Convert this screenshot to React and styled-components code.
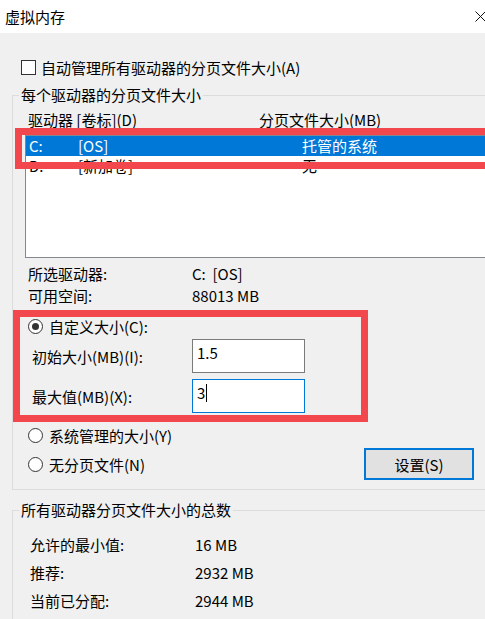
import React from "react";
import styled, { createGlobalStyle } from "styled-components";

const GlobalStyle = createGlobalStyle`
  html, body {
    margin: 0;
    padding: 0;
    background: #f0f0f0;
  }
  body {
    font-family: "Noto Sans CJK SC", "Noto Sans", sans-serif;
    font-size: 15px;
    color: #000;
  }
`;

const Window = styled.div`
  position: relative;
  width: 485px;
  height: 619px;
  overflow: hidden;
  background: #f0f0f0;
`;

const TitleBar = styled.div`
  height: 33px;
  background: #fff;
  display: flex;
  align-items: center;
  justify-content: space-between;
  padding-left: 5px;
  line-height: 22px;
`;

const CloseIcon = styled.svg`
  width: 11px;
  height: 11px;
  margin-right: -1px;
`;

const Body = styled.div`
  padding: 23px 0 0 12px;
`;

const CheckRow = styled.label`
  display: flex;
  align-items: center;
  gap: 5px;
  height: 22px;
  margin-left: 9px;
`;

const CheckBox = styled.span`
  width: 15px;
  height: 15px;
  box-sizing: border-box;
  border: 1px solid #333;
  background: #fff;
`;

const Group = styled.fieldset`
  margin: ${p => p.$top}px 0 0 0;
  padding: ${p => p.$padTop}px 0 ${p => p.$padBottom}px 0;
  width: 520px;
  min-width: 0;
  border: 1px solid #dcdcdc;
  border-right: none;
`;

const Legend = styled.legend`
  margin-left: 6px;
  padding: 0 2px;
  line-height: 22px;
`;

const HeaderRow = styled.div`
  display: flex;
  height: 22px;
  line-height: 22px;
  padding-left: 15px;
`;

const HeaderCell = styled.span`
  width: ${p => p.$w || "auto"};
`;

const ListBox = styled.div`
  margin: 4px 0 0 12px;
  height: 121px;
  background: #fff;
  border: 1px solid #828790;
  border-right: none;
`;

const ListRow = styled.div`
  display: flex;
  height: 20px;
  line-height: 20px;
  padding-left: 3px;
  background: ${p => (p.$selected ? "#0078d7" : "transparent")};
  color: ${p => (p.$selected ? "#fff" : "#000")};
`;

const Cell = styled.span`
  width: ${p => p.$w || "auto"};
  white-space: nowrap;
`;

const InfoList = styled.div`
  margin-top: ${p => p.$top}px;
`;

const InfoRow = styled.div`
  display: flex;
  height: ${p => p.$h}px;
  line-height: ${p => p.$h}px;
  padding-left: ${p => p.$indent}px;
`;

const RadioRow = styled.label`
  display: flex;
  align-items: center;
  gap: 6px;
  height: 22px;
  padding-left: 15px;
  margin-top: ${p => p.$top || 0}px;
`;

const Radio = styled.span`
  position: relative;
  width: 15px;
  height: 15px;
  box-sizing: border-box;
  border: 1px solid #333;
  border-radius: 50%;
  background: #fff;
  &::after {
    content: "";
    display: ${p => (p.$checked ? "block" : "none")};
    position: absolute;
    left: 3px;
    top: 3px;
    width: 7px;
    height: 7px;
    border-radius: 50%;
    background: #333;
  }
`;

const FieldRow = styled.div`
  display: flex;
  align-items: center;
  padding-left: 19px;
  margin-top: ${p => p.$top}px;
`;

const FieldLabel = styled.span`
  width: 160px;
`;

const TextBox = styled.div`
  width: 113px;
  height: 34px;
  box-sizing: border-box;
  padding: 3px 4px;
  line-height: 20px;
  background: #fff;
  border: 1px solid ${p => (p.$focused ? "#0078d7" : "#7a7a7a")};
`;

const Caret = styled.span`
  display: inline-block;
  width: 1px;
  height: 18px;
  margin-left: 1px;
  vertical-align: -3px;
  background: #000;
`;

const BottomRow = styled.div`
  display: flex;
  align-items: center;
  justify-content: space-between;
  width: 461px;
  height: 32px;
  margin-top: 2px;
`;

const Button = styled.button`
  width: 110px;
  height: 32px;
  box-sizing: border-box;
  border: 2px solid #0078d7;
  background: #e1e1e1;
  font: inherit;
  color: #000;
  padding: 0;
`;

const Annotation = styled.div`
  position: absolute;
  left: ${p => p.$x}px;
  top: ${p => p.$y}px;
  width: ${p => p.$w}px;
  height: ${p => p.$h}px;
  box-sizing: border-box;
  border: 7px solid #f2474c;
  pointer-events: none;
`;

const drives = [
  { letter: "C:", label: "[OS]", size: "托管的系统", selected: true },
  { letter: "D:", label: "[新加卷]", size: "无" }
];

const totals = [
  { label: "允许的最小值:", value: "16 MB" },
  { label: "推荐:", value: "2932 MB" },
  { label: "当前已分配:", value: "2944 MB" }
];

export default function App() {
  return (
    <Window>
      <GlobalStyle />
      <TitleBar>
        <span>虚拟内存</span>
        <CloseIcon viewBox="0 0 11 11">
          <path d="M0.5 0.5 L10.5 10.5 M10.5 0.5 L0.5 10.5" stroke="#111" strokeWidth="1" />
        </CloseIcon>
      </TitleBar>
      <Body>
        <CheckRow>
          <CheckBox />
          <span>自动管理所有驱动器的分页文件大小(A)</span>
        </CheckRow>

        <Group $top={6} $padTop={3} $padBottom={9}>
          <Legend>每个驱动器的分页文件大小</Legend>
          <HeaderRow>
            <HeaderCell $w="231px">驱动器 [卷标](D)</HeaderCell>
            <HeaderCell>分页文件大小(MB)</HeaderCell>
          </HeaderRow>
          <ListBox>
            {drives.map(d => (
              <ListRow key={d.letter} $selected={d.selected}>
                <Cell $w="49px">{d.letter}</Cell>
                <Cell $w="224px">{d.label}</Cell>
                <Cell>{d.size}</Cell>
              </ListRow>
            ))}
          </ListBox>
          <InfoList $top={5}>
            <InfoRow $h={22} $indent={15}>
              <Cell $w="164px">所选驱动器:</Cell>
              <Cell>C:&nbsp;&nbsp;[OS]</Cell>
            </InfoRow>
            <InfoRow $h={22} $indent={15}>
              <Cell $w="164px">可用空间:</Cell>
              <Cell>88013 MB</Cell>
            </InfoRow>
          </InfoList>

          <RadioRow $top={8}>
            <Radio $checked />
            <span>自定义大小(C):</span>
          </RadioRow>
          <FieldRow $top={2}>
            <FieldLabel>初始大小(MB)(I):</FieldLabel>
            <TextBox>1.5</TextBox>
          </FieldRow>
          <FieldRow $top={6}>
            <FieldLabel>最大值(MB)(X):</FieldLabel>
            <TextBox $focused>
              3<Caret />
            </TextBox>
          </FieldRow>
          <RadioRow $top={11}>
            <Radio />
            <span>系统管理的大小(Y)</span>
          </RadioRow>
          <BottomRow>
            <RadioRow>
              <Radio />
              <span>无分页文件(N)</span>
            </RadioRow>
            <Button>设置(S)</Button>
          </BottomRow>
        </Group>

        <Group $top={9} $padTop={10} $padBottom={40}>
          <Legend>所有驱动器分页文件大小的总数</Legend>
          {totals.map(t => (
            <InfoRow key={t.label} $h={28} $indent={17}>
              <Cell $w="165px">{t.label}</Cell>
              <Cell>{t.value}</Cell>
            </InfoRow>
          ))}
        </Group>
      </Body>

      <Annotation $x={15} $y={128} $w={480} $h={41} />
      <Annotation $x={13} $y={310} $w={355} $h={112} />
    </Window>
  );
}
